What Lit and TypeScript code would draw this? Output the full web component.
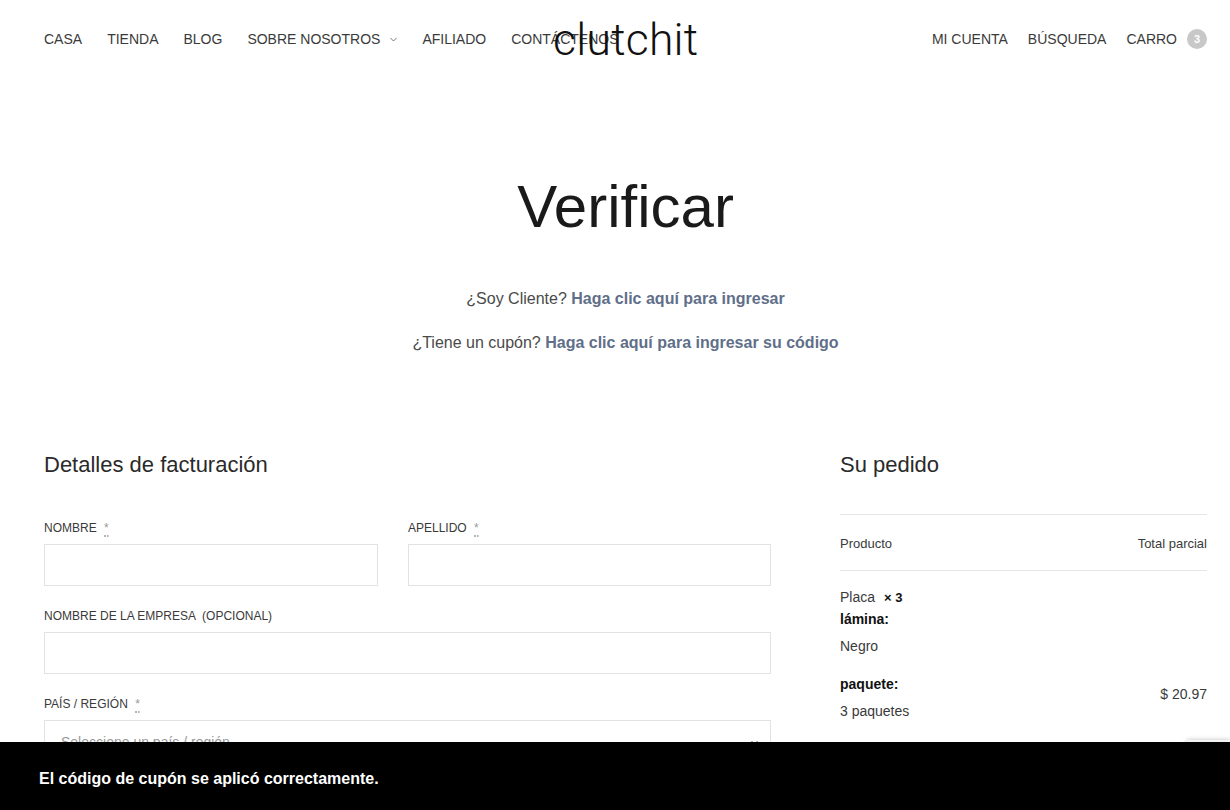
import { html, css, LitElement } from "lit";
import { customElement } from "lit/decorators.js";

@customElement("app-root")
export class AppRoot extends LitElement {
  static styles = css`
    :host {
      display: block;
      position: relative;
      height: 100vh;
      overflow: hidden;
      background: #fff;
      color: #222;
      font-family: "Liberation Sans", Arial, sans-serif;
      font-size: 14px;
    }
    header {
      position: relative;
      display: flex;
      justify-content: space-between;
      align-items: center;
      height: 78px;
      padding: 0 23px 0 44px;
      color: #3a3a3a;
    }
    nav {
      display: flex;
      align-items: center;
      gap: 25px;
    }
    nav.right {
      gap: 20px;
    }
    .has-sub {
      display: flex;
      align-items: center;
      gap: 10px;
    }
    .has-sub svg {
      color: #777;
    }
    .logo {
      position: absolute;
      left: 553px;
      top: 11px;
      font-family: Roboto, sans-serif;
      font-weight: 300;
      font-size: 44.5px;
      letter-spacing: 0.25px;
      line-height: 58px;
      color: #111;
    }
    .cart {
      display: flex;
      align-items: center;
      gap: 10px;
    }
    .count {
      display: flex;
      align-items: center;
      justify-content: center;
      width: 20px;
      height: 20px;
      border-radius: 50%;
      background: #c8c8c8;
      color: #fff;
      font-size: 11px;
      font-weight: 700;
    }
    .intro {
      padding-left: 21px;
      text-align: center;
      font-size: 16px;
      color: #4a4a4a;
    }
    h1 {
      margin: 0;
      padding-top: 92px;
      font-size: 60px;
      line-height: 74px;
      font-weight: 400;
      color: #1a1a1a;
    }
    .intro p {
      margin: 0;
      line-height: 24px;
    }
    .intro p.first {
      margin-top: 43px;
    }
    .intro p.second {
      margin-top: 20px;
    }
    .intro a {
      color: #5f6f89;
      font-weight: 700;
    }
    .columns {
      display: grid;
      grid-template-columns: 727px 367px;
      column-gap: 69px;
      padding: 96px 23px 0 44px;
    }
    h2 {
      margin: 0;
      font-size: 22px;
      line-height: 28px;
      font-weight: 400;
      color: #2a2a2a;
    }
    .fields {
      display: grid;
      grid-template-columns: 334px 363px;
      column-gap: 30px;
      row-gap: 21px;
      margin-top: 40px;
    }
    .wide {
      grid-column: 1 / 3;
    }
    label {
      display: block;
      height: 25px;
      font-size: 12px;
      line-height: 18px;
      color: #3a3a3a;
    }
    abbr {
      margin-left: 4px;
      color: #999;
      text-decoration: none;
      border-bottom: 2px dotted #b5b5b5;
    }
    .box {
      box-sizing: border-box;
      position: relative;
      height: 42px;
      border: 1px solid #e2e2e2;
      background: #fff;
    }
    .select {
      display: flex;
      align-items: center;
      justify-content: space-between;
      padding: 2px 12px 0 16px;
      color: #999;
    }
    .select svg {
      color: #555;
    }
    .summary {
      display: flex;
      flex-direction: column;
    }
    .table-head {
      display: flex;
      justify-content: space-between;
      align-items: center;
      box-sizing: border-box;
      height: 57px;
      padding-top: 2px;
      margin-top: 35px;
      border-top: 1px solid #e5e5e5;
      border-bottom: 1px solid #e5e5e5;
      font-size: 13px;
      color: #3a3a3a;
    }
    .item {
      display: flex;
      justify-content: space-between;
      align-items: flex-end;
      padding-top: 15px;
      color: #3a3a3a;
    }
    .item strong {
      color: #111;
    }
    .item .line {
      height: 22px;
      line-height: 22px;
    }
    .item .value {
      height: 22px;
      line-height: 22px;
      margin-top: 5px;
    }
    .item .gap {
      margin-top: 16px;
    }
    .qty {
      margin-left: 5px;
      font-size: 13px;
      font-weight: 700;
      color: #111;
    }
    .price {
      padding-bottom: 20px;
    }
    .notice {
      position: absolute;
      left: 0;
      right: 0;
      bottom: 0;
      z-index: 3;
      box-sizing: border-box;
      height: 68px;
      padding: 5px 0 0 39px;
      display: flex;
      align-items: center;
      background: #000;
      color: #fff;
      font-size: 16px;
      font-weight: 700;
    }
    .recaptcha {
      position: absolute;
      right: 0;
      bottom: 60px;
      z-index: 2;
      width: 43px;
      height: 10px;
      background: #f3f3f3;
      box-shadow: 0 0 5px rgba(0, 0, 0, 0.25);
    }
  `;

  chevron() {
    return html`<svg width="7" height="5" viewBox="0 0 7 5" fill="none" stroke="currentColor" stroke-width="1">
      <path d="M0.5 1 L3.5 4 L6.5 1" />
    </svg>`;
  }

  render() {
    return html`
      <header>
        <nav>
          <span>CASA</span>
          <span>TIENDA</span>
          <span>BLOG</span>
          <span class="has-sub">SOBRE NOSOTROS ${this.chevron()}</span>
          <span>AFILIADO</span>
          <span>CONTÁCTENOS</span>
        </nav>
        <div class="logo">clutchit</div>
        <nav class="right">
          <span>MI CUENTA</span>
          <span>BÚSQUEDA</span>
          <span class="cart">CARRO <span class="count">3</span></span>
        </nav>
      </header>
      <section class="intro">
        <h1>Verificar</h1>
        <p class="first">¿Soy Cliente? <a>Haga clic aquí para ingresar</a></p>
        <p class="second">¿Tiene un cupón? <a>Haga clic aquí para ingresar su código</a></p>
      </section>
      <section class="columns">
        <div>
          <h2>Detalles de facturación</h2>
          <div class="fields">
            <div>
              <label>NOMBRE <abbr>*</abbr></label>
              <div class="box"></div>
            </div>
            <div>
              <label>APELLIDO <abbr>*</abbr></label>
              <div class="box"></div>
            </div>
            <div class="wide">
              <label>NOMBRE DE LA EMPRESA &nbsp;(OPCIONAL)</label>
              <div class="box"></div>
            </div>
            <div class="wide">
              <label>PAÍS / REGIÓN <abbr>*</abbr></label>
              <div class="box select">
                <span>Seleccione un país / región</span>
                ${this.chevron()}
              </div>
            </div>
          </div>
        </div>
        <div class="summary">
          <h2>Su pedido</h2>
          <div class="table-head">
            <span>Producto</span>
            <span>Total parcial</span>
          </div>
          <div class="item">
            <div>
              <div class="line">Placa <span class="qty">× 3</span></div>
              <div class="line"><strong>lámina:</strong></div>
              <div class="value">Negro</div>
              <div class="line gap"><strong>paquete:</strong></div>
              <div class="value">3 paquetes</div>
            </div>
            <span class="price">$ 20.97</span>
          </div>
        </div>
      </section>
      <div class="recaptcha"></div>
      <div class="notice">El código de cupón se aplicó correctamente.</div>
    `;
  }
}
